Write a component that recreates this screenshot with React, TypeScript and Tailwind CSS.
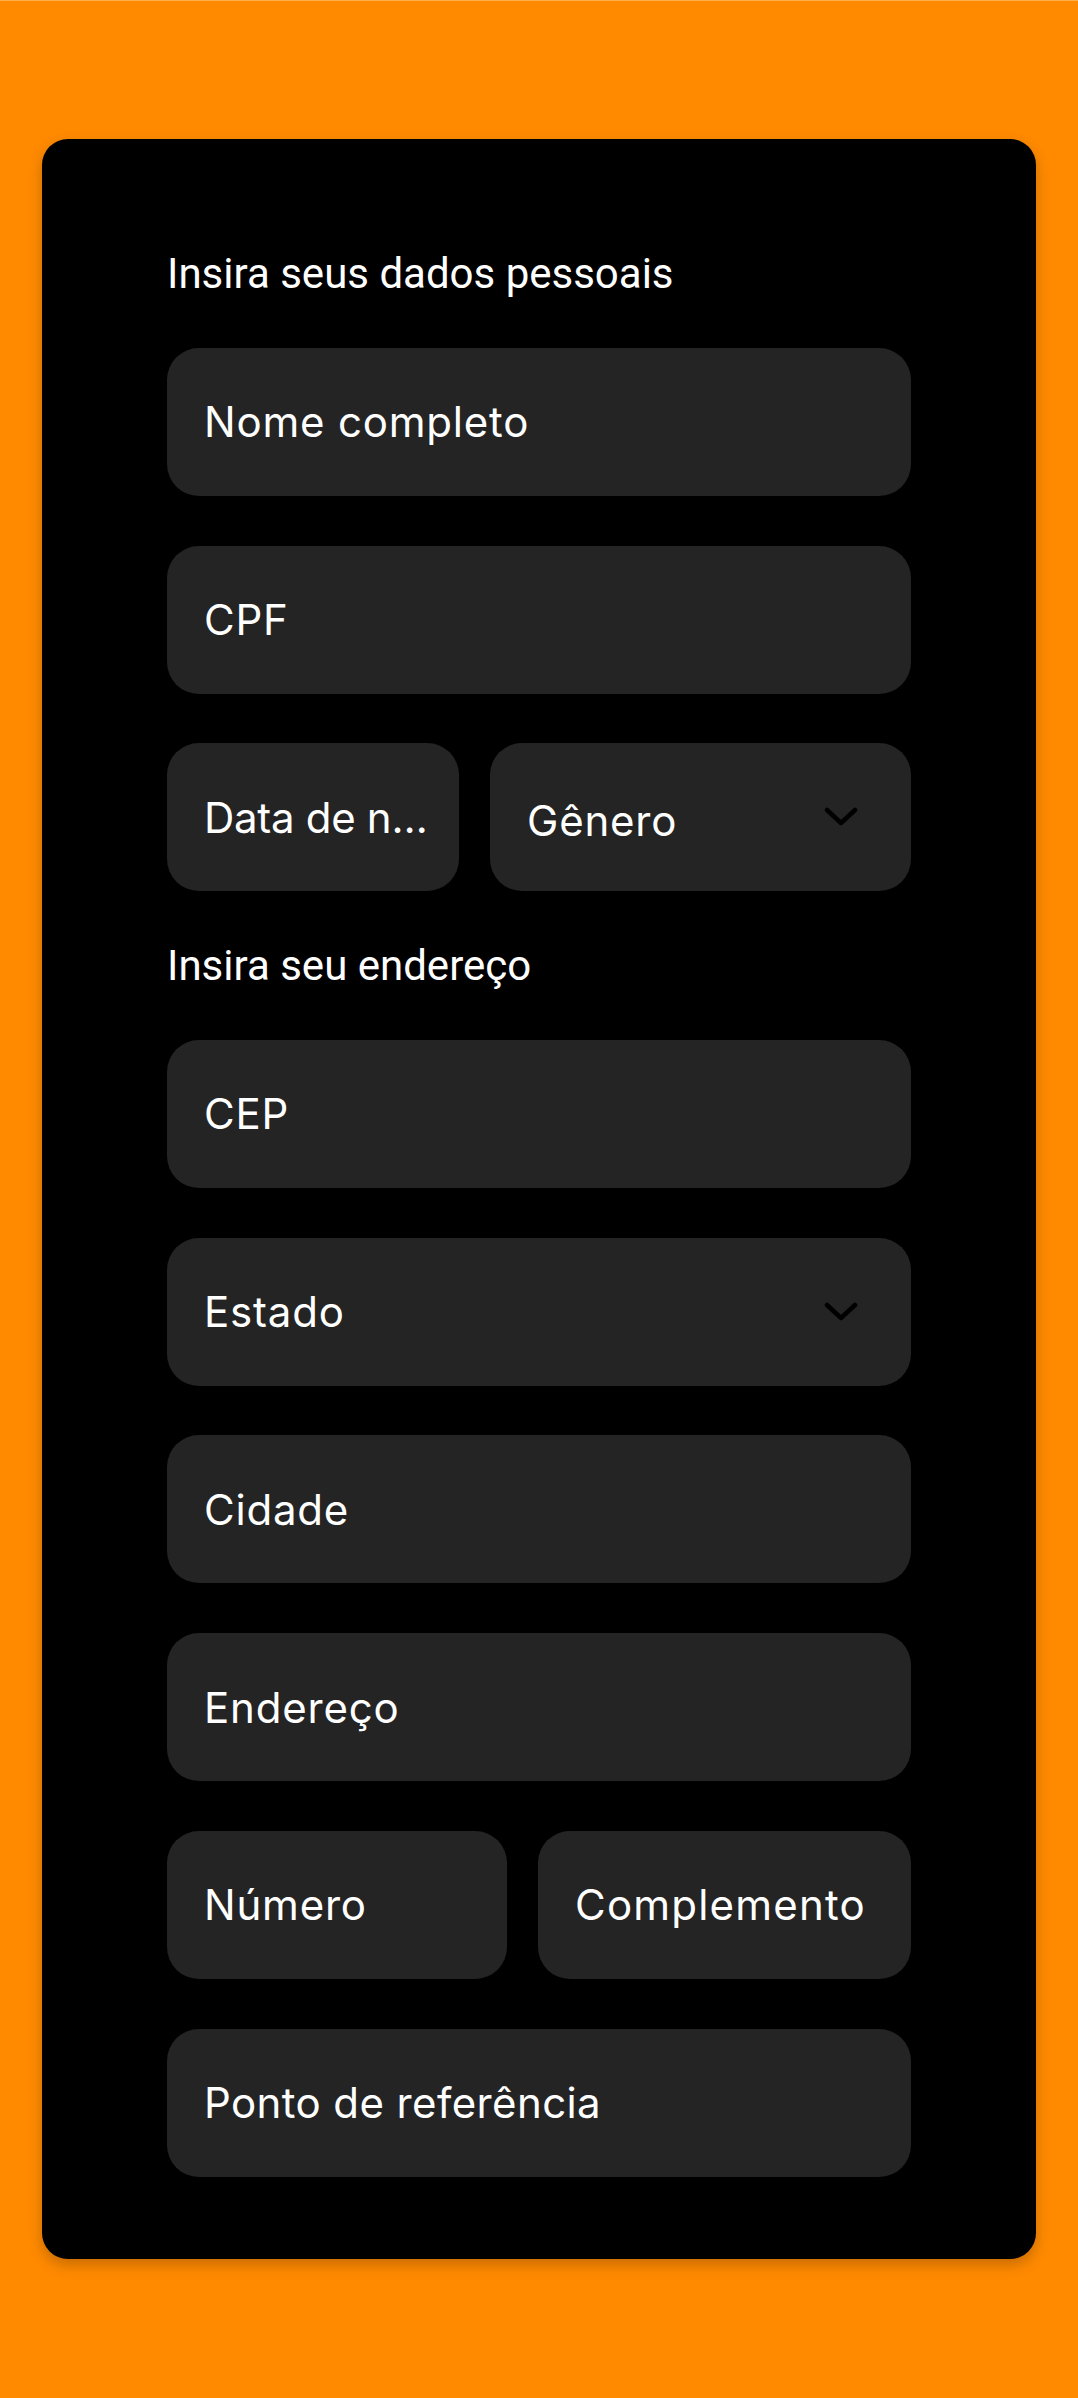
import React from "react";

const Chevron = () => (
  <svg width="34" height="20" viewBox="0 0 34 20" fill="none" className="shrink-0">
    <polyline points="3,3 17,16 31,3" stroke="#000" strokeWidth="4.5" strokeLinecap="round" strokeLinejoin="round" />
  </svg>
);

const Field = ({ label, className = "", select = false, textClass = "tracking-[0.8px]" }: { label: string; className?: string; select?: boolean; textClass?: string }) => (
  <div className={`h-[148px] rounded-[32px] bg-[#242424] flex items-center pl-[37px] pr-[53px] min-w-0 ${className}`}>
    <span className={`text-white text-[42px] leading-[1.3] pt-[2px] truncate flex-1 min-w-0 font-['Inter',sans-serif] ${textClass}`}>{label}</span>
    {select && <Chevron />}
  </div>
);

const Title = ({ children }: { children: React.ReactNode }) => (
  <div className="h-[49px] flex items-center text-white text-[42px] leading-none font-['Roboto',sans-serif]">{children}</div>
);

export default function App() {
  return (
    <div className="w-[1078px] h-[2398px] bg-[#ff8a00] pt-[139px] px-[42px] border-t border-[#ffb04d]">
      <div className="bg-black rounded-[26px] pt-[110px] pb-[82px] px-[125px] shadow-[0_6px_14px_rgba(0,0,0,0.22)] flex flex-col gap-[49.75px] -mt-px">
        <Title>Insira seus dados pessoais</Title>
        <Field label="Nome completo" />
        <Field label="CPF" />
        <div className="flex gap-[31px]">
          <Field label="Data de nascimento" className="w-[292px] shrink-0 !pr-[14px]" textClass="tracking-[-0.3px]" />
          <Field label="Gênero" select className="flex-1" textClass="tracking-[0.8px] !pt-[8px]" />
        </div>
        <Title>Insira seu endereço</Title>
        <Field label="CEP" />
        <Field label="Estado" select />
        <Field label="Cidade" />
        <Field label="Endereço" />
        <div className="flex gap-[31px]">
          <Field label="Número" className="w-[340px] shrink-0" />
          <Field label="Complemento" className="flex-1 !pr-[12px]" textClass="tracking-[1.2px]" />
        </div>
        <Field label="Ponto de referência" textClass="tracking-[0.4px]" />
      </div>
    </div>
  );
}
